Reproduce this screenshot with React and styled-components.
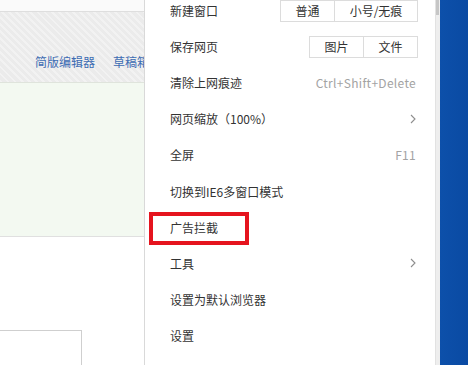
import React from 'react';
import styled, { createGlobalStyle } from 'styled-components';

const GlobalStyle = createGlobalStyle`
  html, body {
    margin: 0;
    padding: 0;
    width: 468px;
    height: 365px;
    overflow: hidden;
    background: #ffffff;
  }
  body {
    font-family: "Microsoft YaHei", "Noto Sans CJK SC", "Noto Sans", sans-serif;
    font-size: 12px;
    color: #333;
  }
`;

const Screen = styled.div`
  display: flex;
  width: 468px;
  height: 365px;
  overflow: hidden;
`;

/* page behind the menu */
const Page = styled.div`
  width: 144px;
  flex: none;
  display: flex;
  flex-direction: column;
  background: #fff;
`;

const TopStrip = styled.div`
  height: 11px;
  background: #fafafa;
  border-bottom: 1px solid #dedede;
`;

const ToolBand = styled.div`
  height: 70px;
  display: flex;
  align-items: flex-end;
  padding: 0 0 11px 35px;
  box-sizing: border-box;
  white-space: nowrap;
  background-color: #ebebeb;
  background-image: repeating-linear-gradient(45deg, rgba(255,255,255,0.35) 0 2px, transparent 2px 5px);
`;

const EditorLink = styled.span`
  color: #3d6cb3;
  line-height: 18px;
`;

const LinkDivider = styled.span`
  width: 1px;
  height: 20px;
  margin: 0 9px 0 9px;
  background: #d2d2d2;
  align-self: flex-end;
  position: relative;
  top: 1px;
`;

const GreenPanel = styled.div`
  height: 153px;
  background: #f3f9f1;
  border-top: 1px solid #dfe4dc;
  border-bottom: 1px solid #e0e0e0;
`;

const Blank = styled.div`
  height: 93px;
`;

const LowerBox = styled.div`
  width: 81px;
  flex: 1;
  border-top: 1px solid #cfcfcf;
  border-right: 1px solid #cfcfcf;
`;

/* the dropdown menu */
const Menu = styled.div`
  width: 290px;
  flex: none;
  background: #fff;
  border-left: 1px solid #d9d9d9;
  display: flex;
  flex-direction: column;
  margin-top: -8px;
`;

const Row = styled.div`
  position: relative;
  height: 36.2px;
  flex: none;
  display: flex;
  align-items: center;
  justify-content: space-between;
  padding: 0 17px 0 25px;
`;

const Label = styled.span`
  color: #333;
  white-space: nowrap;
`;

const Shortcut = styled.span`
  color: #a3a3a3;
  white-space: nowrap;
  letter-spacing: 0.3px;
  margin-right: 2px;
`;

const ButtonGroup = styled.div`
  display: flex;
  border: 1px solid #dcdcdc;
  height: 22px;
  box-sizing: border-box;
  margin-top: 1px;
`;

const GroupButton = styled.span`
  width: ${p => p.w}px;
  display: flex;
  align-items: center;
  justify-content: center;
  color: #333;
  & + & {
    border-left: 1px solid #dcdcdc;
  }
`;

const Highlight = styled.div`
  position: absolute;
  left: 4px;
  top: 3px;
  width: 100px;
  height: 33px;
  border: 4px solid #e5141e;
  box-sizing: border-box;
`;

const Chevron = () => (
  <svg width="6" height="10" viewBox="0 0 6 10" style={{ marginRight: 2 }}>
    <path d="M1 1 L5 5 L1 9" fill="none" stroke="#8e8e8e" strokeWidth="1.1" />
  </svg>
);

const ScrollTrack = styled.div`
  width: 5px;
  flex: none;
  background: #eeeeee;
  border-left: 1px solid #e2e2e2;
  box-sizing: border-box;
  display: flex;
  flex-direction: column;
`;

const ScrollThumb = styled.div`
  width: 3px;
  height: 15px;
  background: #c6c6c6;
`;

const Desktop = styled.div`
  flex: 1;
  background: linear-gradient(90deg, #0d50aa, #0a4aa3);
`;

const items = [
  { label: '新建窗口', buttons: [['普通', 53], ['小号/无痕', 82]] },
  { label: '保存网页', buttons: [['图片', 53], ['文件', 53]] },
  { label: '清除上网痕迹', shortcut: 'Ctrl+Shift+Delete' },
  { label: '网页缩放（100%）', sub: true },
  { label: '全屏', shortcut: 'F11' },
  { label: '切换到IE6多窗口模式' },
  { label: '广告拦截', marked: true },
  { label: '工具', sub: true },
  { label: '设置为默认浏览器' },
  { label: '设置' },
];

export default function App() {
  return (
    <>
      <GlobalStyle />
      <Screen>
        <Page>
          <TopStrip />
          <ToolBand>
            <EditorLink>简版编辑器</EditorLink>
            <LinkDivider />
            <EditorLink>草稿箱</EditorLink>
          </ToolBand>
          <GreenPanel />
          <Blank />
          <LowerBox />
        </Page>

        <Menu>
          {items.map(item => (
            <Row key={item.label}>
              {item.marked && <Highlight />}
              <Label>{item.label}</Label>
              {item.buttons && (
                <ButtonGroup>
                  {item.buttons.map(([text, w]) => (
                    <GroupButton key={text} w={w}>{text}</GroupButton>
                  ))}
                </ButtonGroup>
              )}
              {item.shortcut && <Shortcut>{item.shortcut}</Shortcut>}
              {item.sub && <Chevron />}
            </Row>
          ))}
        </Menu>

        <ScrollTrack>
          <ScrollThumb />
        </ScrollTrack>
        <Desktop />
      </Screen>
    </>
  );
}
